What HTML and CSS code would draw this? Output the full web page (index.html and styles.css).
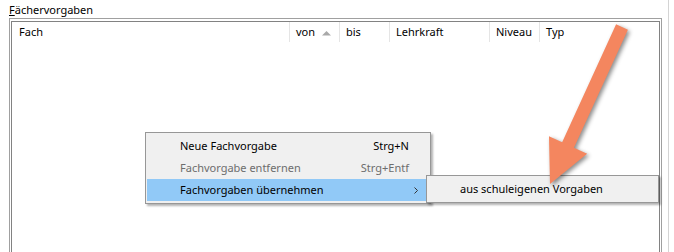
FILE: index.html
```html
<!DOCTYPE html>
<html lang="de">
<head>
<meta charset="utf-8">
<title>Fächervorgaben</title>
<link rel="stylesheet" href="styles.css">
</head>
<body>
<div class="panel">
  <div class="caption"><span class="acc">F</span>ächervorgaben</div>
  <div class="group">
    <div class="list">
      <div class="header">
        <div class="col col-fach">Fach</div>
        <div class="col col-sort"><span>von</span><svg class="sort" width="9" height="5" viewBox="0 0 9 5"><polygon points="0,4.5 4.5,0 9,4.5" fill="#a9a9a9"/></svg></div>
        <div class="col">bis</div>
        <div class="col">Lehrkraft</div>
        <div class="col">Niveau</div>
        <div class="col col-last">Typ</div>
      </div>
    </div>
  </div>
</div>

<div class="menu">
  <div class="item"><span class="label">Neue Fachvorgabe</span><span class="key">Strg+N</span></div>
  <div class="item disabled"><span class="label">Fachvorgabe entfernen</span><span class="key">Strg+Entf</span></div>
  <div class="item active"><span class="label">Fachvorgaben übernehmen</span><svg class="chev" width="4" height="7" viewBox="0 0 4 7"><polyline points="0.5,0.5 3.5,3.5 0.5,6.5" fill="none" stroke="#333" stroke-width="1"/></svg></div>
</div>

<div class="submenu">
  <div class="item sub-item"><span class="label">aus schuleigenen Vorgaben</span></div>
</div>

<svg class="arrow" width="674" height="252" viewBox="0 0 674 252">
  <polygon points="616.1,24.27 562.16,142.23 548.99,136.14 550,184 587.13,153.78 573.96,147.69 627.9,29.73" fill="#f4865f"/>
</svg>
</body>
</html>
```
FILE: styles.css
```css
body {
  margin: 0;
  width: 674px;
  height: 252px;
  overflow: hidden;
  position: relative;
  background: #ffffff;
  font-family: "Noto Sans", sans-serif;
  font-size: 11px;
  color: #000000;
}

.panel {
  width: 668px;
  height: 252px;
  border-right: 1px solid #d4d4d4;
  display: flex;
  flex-direction: column;
}

.caption {
  padding: 2px 0 0 9px;
  height: 16px;
  line-height: 16px;
}

.acc {
  text-decoration: underline;
}

.group {
  flex: 1;
  margin: 0 6px 0 9px;
  border: 1px solid #a0a0a0;
  border-bottom: none;
  padding: 2px 1px 0;
  display: flex;
}

.list {
  flex: 1;
  border: 1px solid #828282;
  border-bottom: none;
}

.header {
  display: grid;
  grid-template-columns: 278px 50px 50px 100px 50px 1fr;
  height: 20px;
  line-height: 20px;
}

.col {
  border-right: 1px solid #e5e5e5;
  padding-left: 6px;
  white-space: nowrap;
}

.col-fach {
  padding-left: 7px;
}

.col-last {
  border-right: none;
}

.col-sort {
  display: flex;
  justify-content: space-between;
  align-items: center;
  padding-right: 8px;
}

.sort {
  display: block;
  margin-top: 2px;
}

.menu {
  position: absolute;
  left: 145px;
  top: 132px;
  width: 281px;
  padding: 2px 2px 2px 1px;
  background: #f0f0f0;
  border: 1px solid #979797;
  box-shadow: 2px 2px 2px rgba(0, 0, 0, 0.3);
}

.item {
  display: flex;
  align-items: center;
  height: 22px;
  line-height: 22px;
  padding: 0 19px 0 33px;
  white-space: nowrap;
}

.item .label {
  flex: 1;
}

.disabled {
  color: #6d6d6d;
}

.active {
  background: #91c9f7;
  padding-right: 10px;
}

.chev {
  display: block;
}

.submenu {
  position: absolute;
  left: 426px;
  top: 175px;
  width: 227px;
  padding: 2px;
  background: #f0f0f0;
  border: 1px solid #979797;
  box-shadow: 2px 2px 2px rgba(0, 0, 0, 0.3);
}

.sub-item {
  padding-left: 31px;
}

.arrow {
  position: absolute;
  left: 0;
  top: 0;
  pointer-events: none;
  filter: drop-shadow(2px 2px 2px rgba(0, 0, 0, 0.45));
}
```
